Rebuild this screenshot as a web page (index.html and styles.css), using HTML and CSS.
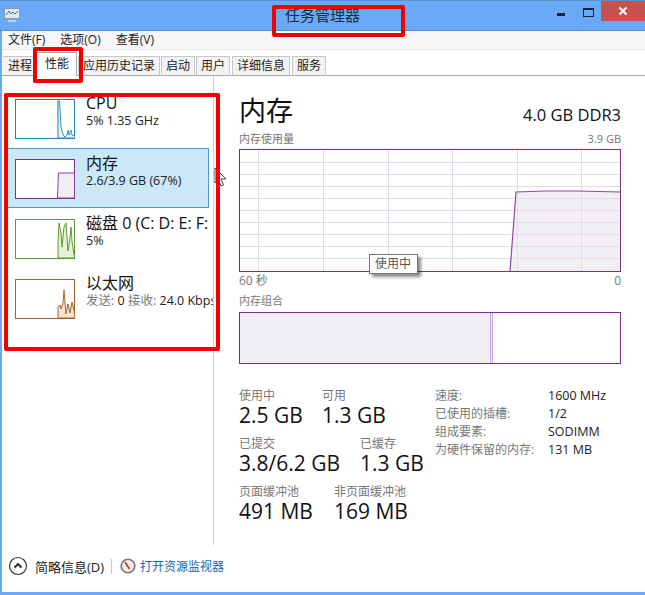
FILE: index.html
```html
<!DOCTYPE html>
<html lang="zh-CN">
<head>
<meta charset="utf-8">
<title>任务管理器</title>
<link rel="stylesheet" href="styles.css">
</head>
<body>
<div class="window">
  <header class="titlebar">
    <svg class="app-icon" width="18" height="16" viewBox="0 0 18 16"><rect x="1.5" y="1.5" width="15" height="10" fill="#dfe9f2" stroke="#8a9aa8"/><path d="M3 8l3-4 2 3 2-2 2 2 3-3" fill="none" stroke="#3f6f9f"/><path d="M5 14h8" stroke="#c4ced6" stroke-width="2"/></svg>
    <div class="title">任务管理器</div>
    <div class="controls">
      <span class="min"></span>
      <span class="max"></span>
      <span class="close"><svg width="10" height="10" viewBox="0 0 10 10"><path d="M1.5 1.5l7 7M8.500 1.500l-7 7" stroke="#fff" stroke-width="2"/></svg></span>
    </div>
  </header>
  <nav class="menu"><span>文件(F)</span><span>选项(O)</span><span>查看(V)</span></nav>
  <div class="tabs">
    <span class="tab tab-first">进程</span>
    <span class="tab active">性能</span>
    <span class="tab">应用历史记录</span>
    <span class="tab">启动</span>
    <span class="tab">用户</span>
    <span class="tab">详细信息</span>
    <span class="tab">服务</span>
  </div>
  <div class="content">
    <aside class="sidebar">
      <div class="item">
        <svg class="thumb" width="60" height="40" viewBox="0 0 60 40"><rect x=".5" y=".5" width="59" height="39" fill="#fff" stroke="#1b7fb0"/><path d="M43 1v38" stroke="#1b7fb0" stroke-opacity=".6"/><path d="M43 39V2h1.500l1.500 26 2 8 2 2 2-2 1-5 1 5 2-5 1 5 3 1v2z" fill="#e4f1f8" stroke="#3a93bd"/></svg>
        <div class="item-text"><div class="item-name">CPU</div><div class="item-sub">5% 1.35 GHz</div></div>
      </div>
      <div class="item selected">
        <svg class="thumb" width="60" height="40" viewBox="0 0 60 40"><rect x=".5" y=".5" width="59" height="39" fill="#fff" stroke="#7b2e96"/><path d="M42.500 39l1-25H59.500V39z" fill="#f1eef4" stroke="#8a3fa5"/></svg>
        <div class="item-text"><div class="item-name">内存</div><div class="item-sub">2.6/3.9 GB (67%)</div></div>
      </div>
      <div class="item">
        <svg class="thumb" width="60" height="40" viewBox="0 0 60 40"><rect x=".5" y=".5" width="59" height="39" fill="#fff" stroke="#5d9b2e"/><path d="M43 39V24l1-20 2 10 1 14 2-20 2-4 1 14 1 14 2-14 1-10 1 14 2 14 1 3z" fill="#e4f0d8" stroke="#5d9b2e"/></svg>
        <div class="item-text"><div class="item-name">磁盘 0 (C: D: E: F:</div><div class="item-sub">5%</div></div>
      </div>
      <div class="item">
        <svg class="thumb" width="60" height="40" viewBox="0 0 60 40"><rect x=".5" y=".5" width="59" height="39" fill="#fff" stroke="#a0622a"/><path d="M43 39V28l2-2 1 4 2-6 1-13 2 24 2-10 2 9 2-11 2 8 1 8z" fill="#f6e4d2" stroke="#a9652b"/></svg>
        <div class="item-text"><div class="item-name">以太网</div><div class="item-sub"><span class="muted">发送:</span> 0 <span class="muted">接收:</span> 24.0 Kbps</div></div>
      </div>
    </aside>
    <main class="detail">
      <div class="head"><h1>内存</h1><div class="spec">4.0 GB DDR3</div></div>
      <div class="caption cap-top"><span>内存使用量</span><span>3.9 GB</span></div>
      <svg class="graph" width="382" height="123" viewBox="0 0 382 123">
        <rect width="382" height="123" fill="#fff"/>
        <path d="M271 122.500L277 43l30-1 32 0 42 1v79.500z" fill="#f1eff4"/>
        <path d="M19.500 1v121M84.500 1v121M149.500 1v121M213.500 1v121M278.500 1v121M342.500 1v121M1 13.500h380M1 25.500h380M1 37.500h380M1 49.500h380M1 61.500h380M1 73.500h380M1 85.500h380M1 97.500h380M1 109.500h380" stroke="#e3dbe9" fill="none"/>
        <path d="M271 122.500L277 43l30-1 32 0 42 1" fill="none" stroke="#9349ad" stroke-width="1.200"/>
        <rect x=".5" y=".5" width="381" height="122" fill="none" stroke="#7b2e8e"/>
      </svg>
      <div class="caption cap-axis"><span>60 秒</span><span>0</span></div>
      <div class="caption cap-combo"><span>内存组合</span></div>
      <div class="composition"><div class="bar-used"></div><div class="bar-free"></div></div>
      <div class="stats">
        <div class="stats-left">
          <div class="stat-row">
            <div class="stat w-83"><div class="label">使用中</div><div class="value">2.5 GB</div></div>
            <div class="stat"><div class="label">可用</div><div class="value">1.3 GB</div></div>
          </div>
          <div class="stat-row">
            <div class="stat w-121"><div class="label">已提交</div><div class="value">3.8/6.2 GB</div></div>
            <div class="stat"><div class="label">已缓存</div><div class="value">1.3 GB</div></div>
          </div>
          <div class="stat-row">
            <div class="stat w-95"><div class="label">页面缓冲池</div><div class="value">491 MB</div></div>
            <div class="stat"><div class="label">非页面缓冲池</div><div class="value">169 MB</div></div>
          </div>
        </div>
        <dl class="props">
          <dt>速度:</dt><dd>1600 MHz</dd>
          <dt>已使用的插槽:</dt><dd>1/2</dd>
          <dt>组成要素:</dt><dd>SODIMM</dd>
          <dt>为硬件保留的内存:</dt><dd>131 MB</dd>
        </dl>
      </div>
    </main>
  </div>
  <footer class="footer">
    <svg class="chev" width="20" height="20" viewBox="0 0 20 20"><circle cx="10" cy="10" r="8.500" fill="#fff" stroke="#333" stroke-width="1.200"/><path d="M6.500 11.500L10 8l3.500 3.500" fill="none" stroke="#222" stroke-width="1.800"/></svg>
    <span class="less">简略信息(D)</span>
    <span class="sep"></span>
    <svg class="monitor" width="16" height="16" viewBox="0 0 16 16"><circle cx="8" cy="8" r="6.800" fill="#f4efe6" stroke="#77736c" stroke-width="1.600"/><path d="M5 4l4.500 7" stroke="#c8322c" stroke-width="1.600"/></svg>
    <span class="link">打开资源监视器</span>
  </footer>

  <div class="tooltip">使用中</div>
  <svg class="cursor" width="13" height="21" viewBox="0 0 13 21"><path d="M1 1v15l3.500-3 2.500 6 2.500-1-2.500-6h5z" fill="#fff" stroke="#444"/></svg>
  <div class="mark mark-title"></div>
  <div class="mark mark-tab"></div>
  <div class="mark mark-side"></div>
</div>
</body>
</html>
```
FILE: styles.css
```css
* { box-sizing: border-box; }
html, body { margin: 0; padding: 0; }
body { width: 645px; height: 595px; overflow: hidden; background: #fff; font-family: "Open Sans", "Noto Sans CJK SC", sans-serif; color: #111; }
.window { position: relative; width: 645px; height: 595px; display: flex; flex-direction: column; border-left: 2px solid #69a9f5; border-bottom: 3px solid #69a9f5; }

.titlebar { height: 31px; margin-left: -2px; padding-left: 3px; display: flex; align-items: center; background: #69a9f5; border-top: 1px solid #5c8fd0; border-bottom: 1px solid #5d8dc4; flex: none; }
.app-icon { flex: none; margin-top: -1px; }
.title { margin-left: 264px; font-size: 15px; line-height: 22px; color: #1d2c40; margin-top: -1px; }
.controls { margin-left: auto; align-self: flex-start; display: flex; align-items: flex-start; }
.min { width: 8px; height: 3px; margin-top: 12px; margin-right: 18px; background: #10263f; }
.max { width: 11px; height: 9px; margin-top: 7px; margin-right: 7px; border: 1px solid #10263f; border-top-width: 2px; }
.close { width: 44px; height: 20px; background: #c75050; display: flex; align-items: center; justify-content: center; }

.menu { height: 19px; flex: none; display: flex; gap: 15px; padding-left: 6px; align-items: center; background: #f5f6f7; border-bottom: 1px solid #e8e8e8; font-size: 12px; line-height: 18px; color: #222; }

.tabs { height: 26px; flex: none; display: flex; align-items: flex-end; gap: 1px; padding-left: 1px; border-bottom: 1px solid #a9a9a9; }
.tab { height: 20px; margin-bottom: -1px; padding: 0 4px; font-size: 12px; line-height: 18px; color: #222; background: #f3f3f3; border: 1px solid #c8c8c8; border-bottom-color: #a9a9a9; }
.tab:nth-child(5), .tab:nth-child(6) { margin-right: 1px; }
.tab-first { width: 34px; border-left: 0; padding: 0 0 0 5px; }
.active { height: 24px; width: 41px; margin: 0 0 -1px -2px; padding: 2px 0 0 8px; background: #fff; border-color: #a9a9a9; border-bottom: 0; }

.content { flex: 1; display: flex; min-height: 0; }
.sidebar { width: 212px; flex: none; padding: 12px 0 0 5px; border-right: 1px solid #cfcfcf; overflow: hidden; }
.item { width: 206px; height: 60px; padding: 10px 0 0 7px; display: flex; gap: 11px; border: 1px solid transparent; border-right: 0; white-space: nowrap; }
.selected { width: 202px; background: #cbe8f6; border: 1px solid #4b9cc6; }
.thumb { flex: none; }
.item-text { margin-top: -6px; }
.item-name { font-size: 16px; line-height: 20px; color: #111; }
.item-sub { font-size: 12.500px; line-height: 16px; color: #222; }
.muted { color: #777; }

.detail { flex: 1; padding: 15px 24px 0 25px; min-width: 0; }
.head { display: flex; justify-content: space-between; align-items: flex-end; height: 38px; }
h1 { margin: 0; font-size: 27px; font-weight: 400; line-height: 36px; color: #111; }
.spec { font-size: 16.500px; line-height: 22px; margin-bottom: 3px; color: #111; }
.caption { display: flex; justify-content: space-between; font-size: 11px; line-height: 14px; color: #777; }
.cap-top { margin-top: 3px; margin-bottom: 3px; }
.graph { display: block; }
.cap-axis { margin-top: 2px; font-size: 12px; }
.cap-combo { margin-top: 6px; margin-bottom: 4px; }
.composition { height: 52px; display: flex; border: 1px solid #7b2e8e; }
.bar-used { width: 253px; background: #f1eff4; border-right: 3px double #c8a5d8; }
.bar-free { flex: 1; }

.stats { display: flex; margin-top: 23px; }
.stats-left { width: 196px; flex: none; }
.stat-row { display: flex; height: 48px; white-space: nowrap; }
.w-83 { width: 83px; }
.w-121 { width: 121px; }
.w-95 { width: 95px; }
.label { padding-top: 1px; margin-bottom: -1px; font-size: 12px; line-height: 16px; color: #777; }
.value { font-size: 21px; line-height: 25px; color: #111; }
.props { margin: 0; display: grid; grid-template-columns: 113px auto; grid-auto-rows: 18px; align-content: start; font-size: 12px; line-height: 18px; }
dt { color: #777; white-space: nowrap; }
dd { margin: 0; font-size: 12.500px; color: #222; }

.footer { height: 47px; flex: none; display: flex; align-items: center; padding: 0 0 5px 6px; font-size: 12px; }
.chev { flex: none; }
.less { margin-left: 7px; font-size: 13px; color: #222; }
.sep { width: 1px; height: 15px; margin: 0 8px 0 7px; background: #c8c8c8; }
.monitor { flex: none; }
.link { margin-left: 4px; color: #1a5fb0; }

.tooltip { position: absolute; left: 367px; top: 254px; width: 49px; height: 20px; padding-left: 5px; font-size: 12px; line-height: 18px; color: #555; background: #fff; border: 1px solid #777; box-shadow: 3px 3px 3px rgba(0, 0, 0, .45); }
.cursor { position: absolute; left: 212px; top: 167px; }
.mark { position: absolute; border: 4px solid #f00000; border-radius: 2px; }
.mark-title { left: 270px; top: 5px; width: 133px; height: 32px; }
.mark-tab { left: 31px; top: 47px; width: 50px; height: 36px; }
.mark-side { left: 2px; top: 93px; width: 216px; height: 258px; }
```
